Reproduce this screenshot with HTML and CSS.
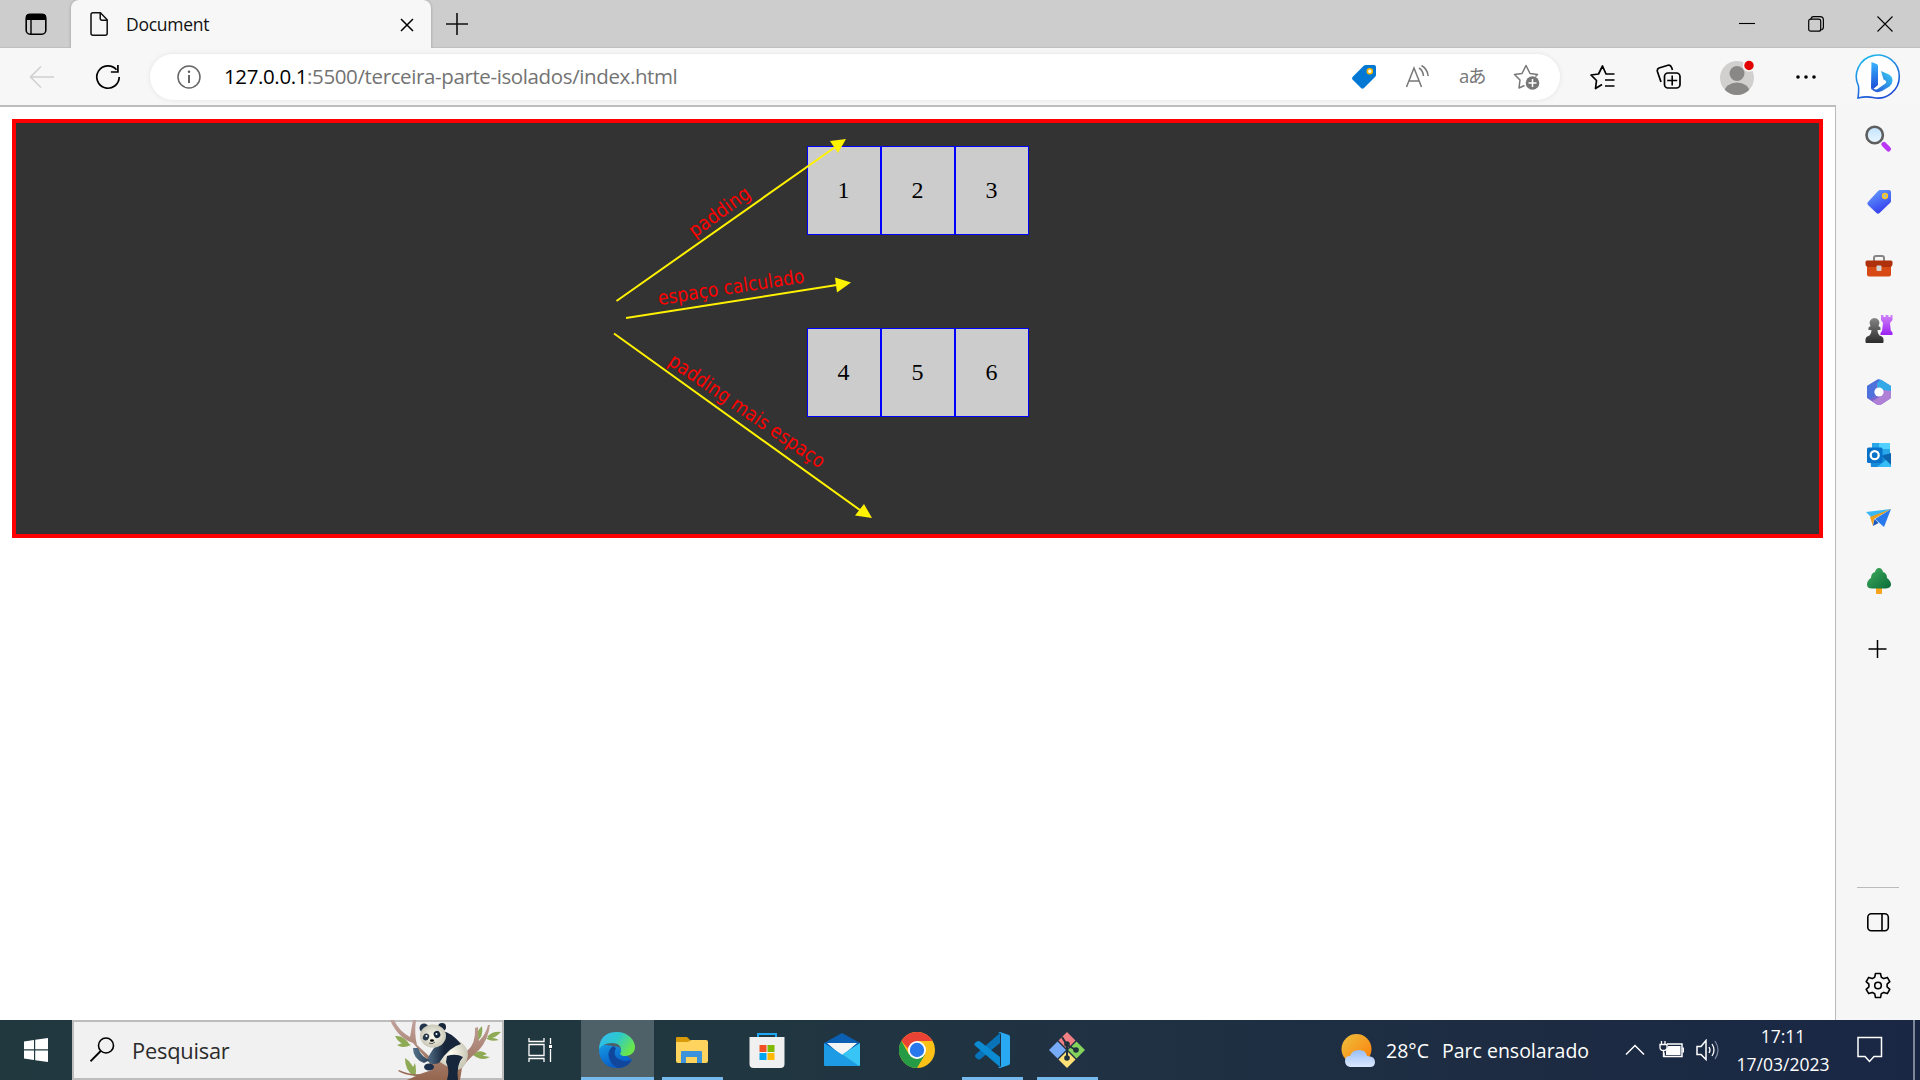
FILE: index.html
```html
<!DOCTYPE html>
<html lang="pt-BR">
<head>
<meta charset="utf-8">
<title>Document</title>
<link rel="stylesheet" href="styles.css">
</head>
<body>
<div class="screen">
  <header class="tabstrip">
    <div class="workspace"><svg width="24" height="24" viewBox="0 0 24 24"><rect x="2.2" y="2.2" width="19.6" height="20" rx="4" fill="none" stroke="#000" stroke-width="1.6"/><path d="M2 8V5q0-3 3-3h14q3 0 3 3v3z"/><path d="M7 8v14" stroke="#000" stroke-width="1.4"/></svg></div>
    <div class="tab">
      <svg width="20" height="26" viewBox="0 0 20 26"><path d="M4 1.8h7.4l6.8 7v13.4q0 2-2 2H4q-2 0-2-2V3.8q0-2 2-2zM11.2 2v5.2q0 2 2 2h5" fill="none" stroke="#111" stroke-width="1.5"/></svg>
      <span class="tab-title">Document</span>
      <svg class="tab-close" width="14" height="14" viewBox="0 0 14 14"><path d="M1 1l12 12M13 1L1 13" stroke="#000" stroke-width="1.5"/></svg>
    </div>
    <svg class="newtab" width="22" height="22" viewBox="0 0 22 22"><path d="M11 0v22M0 11h22" stroke="#111" stroke-width="1.6"/></svg>
    <div class="winbtns">
      <svg width="16" height="16" viewBox="0 0 16 16"><path d="M0 7.500h16" stroke="#000" stroke-width="1.1"/></svg>
      <svg width="16" height="16" viewBox="0 0 16 16"><path d="M3 3.5V2.7Q3.5.7 5.5.7H12Q15.4.7 15.4 4v7q0 2.4-2.2 2.8" fill="none" stroke="#000" stroke-width="1.2"/><rect x=".7" y="3.2" width="12" height="12" rx="2" fill="none" stroke="#000" stroke-width="1.2"/></svg>
      <svg width="16" height="16" viewBox="0 0 16 16"><path d="M.5.5l15 15M15.500.5l-15 15" stroke="#000" stroke-width="1.1"/></svg>
    </div>
  </header>

  <div class="toolbar">
    <svg class="back" width="26" height="24" viewBox="0 0 26 24"><path d="M12 1.500L1.500 12 12 22.500M1.500 12H25" fill="none" stroke="#d0d0d0" stroke-width="1.6"/></svg>
    <svg class="reload" width="26" height="26" viewBox="0 0 26 26"><path d="M24.200 13A11.200 11.200 0 1 1 21.500 5.700M22.900 1v7h-7" fill="none" stroke="#000" stroke-width="1.7"/></svg>
    <div class="omnibox">
      <svg width="24" height="24" viewBox="0 0 24 24"><circle cx="12" cy="12" r="11" fill="none" stroke="#666" stroke-width="1.5"/><path d="M12 10v8" stroke="#555" stroke-width="1.8"/><circle cx="12" cy="6.800" r="1.200" fill="#555"/></svg>
      <span class="url"><b>127.0.0.1</b>:5500/terceira-parte-isolados/index.html</span>
      <div class="omni-actions">
        <svg width="26" height="26" viewBox="0 0 26 26"><path d="M15 1h8q2 0 2 2v8q0 1-1 2L13 24q-1.500 1.500-3 0L1.500 15.500q-1-1.200 0-2.500L12.500 2q1-1 2.500-1z" fill="#0078d4"/><circle cx="18.800" cy="7.200" r="2.500" fill="#fff" stroke="#f5b800" stroke-width="1.600"/></svg>
        <svg width="26" height="26" viewBox="0 0 26 26"><path d="M1.500 23L9 4l7.500 19M4 17h10M14 4q4 2.500 4.500 8M16.500 1.500q6 3.500 6.700 10.500" fill="none" stroke="#777" stroke-width="1.500"/></svg>
        <span class="lang">aあ</span>
        <svg width="28" height="28" viewBox="0 0 28 28"><path d="M11.500 22.500L6 25l1-8-5.500-5.500 7.500-1L13 2.500l4 8 7.500 1-2 2" fill="none" stroke="#777" stroke-width="1.500" stroke-linejoin="round"/><circle cx="19.500" cy="20" r="6.800" fill="#767676"/><path d="M19.500 16v8M15.500 20h8" stroke="#fff" stroke-width="1.500"/></svg>
      </div>
    </div>
    <div class="tools">
      <svg width="26" height="26" viewBox="0 0 26 26"><path d="M12 20.500L5.500 24.500l1-8L1 11l7.500-1L12.500 2l3.500 8h8.500M15 16h9.500M15 22h9.500" fill="none" stroke="#000" stroke-width="1.700" stroke-linejoin="round"/></svg>
      <svg width="26" height="26" viewBox="0 0 26 26"><path d="M5 18L1.400 7.500Q.800 5 3 4L12 1.200q2.500-.7 3.500 2L16.500 6" fill="none" stroke="#000" stroke-width="1.700"/><rect x="8.500" y="9" width="15.500" height="15" rx="3.500" fill="none" stroke="#000" stroke-width="1.700"/><path d="M16.200 11.500v10M11.200 16.500h10" stroke="#000" stroke-width="1.600"/></svg>
      <svg width="38" height="38" viewBox="0 0 38 38"><defs><clipPath id="av"><circle cx="18" cy="20" r="17"/></clipPath></defs><circle cx="18" cy="20" r="17" fill="#d2d0ce"/><g clip-path="url(#av)"><circle cx="18" cy="15.500" r="7.500" fill="#8a8886"/><ellipse cx="18" cy="34" rx="12.500" ry="9.500" fill="#8a8886"/></g><circle cx="30" cy="7.500" r="6.200" fill="#f7f7f7"/><circle cx="30" cy="7.500" r="4.700" fill="#e30000"/></svg>
      <svg width="22" height="6" viewBox="0 0 22 6"><circle cx="3" cy="3" r="1.800"/><circle cx="11" cy="3" r="1.800"/><circle cx="19" cy="3" r="1.800"/></svg>
      <svg class="bing" width="50" height="50" viewBox="0 0 50 50"><defs><linearGradient id="b1" x1="0" y1="0" x2=".5" y2="1"><stop offset="0" stop-color="#20c5f0"/><stop offset="1" stop-color="#204fd8"/></linearGradient><linearGradient id="b2" x1="0" y1="0" x2="0" y2="1"><stop offset="0" stop-color="#39b4ff"/><stop offset="1" stop-color="#1947d4"/></linearGradient><linearGradient id="b3" x1="0" y1="1" x2="1" y2="0"><stop offset="0" stop-color="#2452d5"/><stop offset="1" stop-color="#38cef5"/></linearGradient></defs><path d="M4 46q1-7 .5-12A21.500 21.500 0 1 1 19 45.500Q12 44 4 46z" fill="#fff" stroke="url(#b1)" stroke-width="1.600"/><path d="M17.500 10l5 2q1.500.7 1.500 2v19l-6 5q-1-1-1-3z" fill="url(#b2)"/><path d="M27 19l8 3.500q3.500 2 3.500 6 0 3-3 6L28 39q-5 2.500-9-.500-1.500-2-1-4 2 4.500 5.500 2.500l8-5.500q2-2-1-3.500l-1-.600z" fill="url(#b3)"/></svg>
    </div>
  </div>

  <div class="middle">
    <main class="page">
      <section class="container">
        <div class="row"><div class="item">1</div><div class="item">2</div><div class="item">3</div></div>
        <div class="row"><div class="item">4</div><div class="item">5</div><div class="item">6</div></div>
        <svg class="notes" width="300" height="411" viewBox="600 123 300 411">
          <g stroke="#fff200" stroke-width="2"><path d="M616.500 301L836 146.500M626 318L840 284.500M614 333.500L862 511.500"/></g>
          <g fill="#fff200"><path d="M846 139l-16 2 8 12zM851 282.500l-16-5 2 15zM872 518l-8-14-9 11.500z"/></g>
          <g class="labels">
            <text transform="translate(694.500 238) rotate(-36)" textLength="71" lengthAdjust="spacingAndGlyphs">padding</text>
            <text transform="translate(659 305) rotate(-8.800)" textLength="148" lengthAdjust="spacingAndGlyphs">espaço calculado</text>
            <text transform="translate(667 364) rotate(34.500)" textLength="185" lengthAdjust="spacingAndGlyphs">padding mais espaço</text>
          </g>
        </svg>
      </section>
    </main>

    <aside class="sidebar">
      <nav class="apps">
        <svg viewBox="0 0 28 28"><defs><linearGradient id="lens" x2="0" y2="1"><stop stop-color="#c3e4ff"/><stop offset="1" stop-color="#e9f6ff"/></linearGradient></defs><path d="M17 18l7.500 7" stroke="#777" stroke-width="3"/><path d="M19 19.500l4.500 4.500" stroke="#b937f5" stroke-width="5" stroke-linecap="round"/><circle cx="9.700" cy="10" r="8.200" fill="url(#lens)" stroke="#5e5e5e" stroke-width="2.600"/></svg>
        <svg viewBox="0 0 28 28"><defs><linearGradient id="tg" x2=".5" y2="1"><stop stop-color="#67a6ff"/><stop offset="1" stop-color="#353fee"/></linearGradient></defs><path d="M14.500 2H24q2 0 2 2v9q0 1-1 2L14.500 25q-1.500 1.500-3 0L3 17q-1.500-1.500 0-3L13 3z" fill="url(#tg)"/><circle cx="20" cy="8" r="2.300" fill="#9bd" stroke="#ffc71c" stroke-width="1.700"/></svg>
        <svg viewBox="0 0 28 28"><path d="M9 9V6q0-2 2-2h6q2 0 2 2v3" fill="none" stroke="#858585" stroke-width="2"/><rect x="2" y="12" width="24" height="12.500" rx="2" fill="#d74a16"/><path d="M2 8.500h24q1.500 0 1.500 1.500v2q0 3-3.500 3H4q-3.500 0-3.500-3v-2Q.500 8.500 2 8.500z" fill="#ae300c"/><rect x="11.500" y="13.500" width="5" height="5.500" rx="1" fill="#d4d4d4"/></svg>
        <svg viewBox="0 0 28 28"><defs><linearGradient id="rk" x2="0" y2="1"><stop stop-color="#cf83f8"/><stop offset="1" stop-color="#9c20f3"/></linearGradient><linearGradient id="pw" x2="0" y2="1"><stop stop-color="#858585"/><stop offset="1" stop-color="#2b2b2b"/></linearGradient></defs><path d="M16 0h2.500v2h2V0h3v2h2V0H27.500v5L25 8l.8 7.500 1.700 2V20H15.500v-2l1.500-2 1-8-2-3z" fill="url(#rk)"/><path d="M9.500 3a5 5 0 0 1 4 8l2 1.500v2.500h-3q0 3.500 2 5.500 4 1 4 4V27q0 1-1 1h-16q-1 0-1-1v-2.500q0-3 4-4 2-2 2-5.500h-3v-2.500l2-1.500a5 5 0 0 1 4-8z" fill="url(#pw)"/></svg>
        <svg viewBox="0 0 28 28"><path d="M11 2.500Q14 .5 17 2.500L26 8v12L17 26q-3 2-6 0L2 20V8z" fill="#7568d0"/><path d="M12 1.800q3-1 5 .5L26 8v9l-8.500-4L12 9z" fill="#35a8e8"/><path d="M26 13v7l-9 6q-3 2-6 0l-4-2.800 11-6.200V12z" fill="#b07fd6"/><path d="M2 8l9-5.500Q13 1 15 2l-4 4.500V17l-6 4-3-1.500z" fill="#4d72dc"/><circle cx="14" cy="14" r="4.600" fill="#fff"/></svg>
        <svg viewBox="0 0 28 28"><path d="M7 2h18v13H7z" fill="#28a8ea"/><path d="M14 2h11v6H14z" fill="#50d0ff"/><path d="M5 14l21-1v13H6z" fill="#168bd8"/><path d="M12 26l14-11v11z" fill="#35bdf5"/><path d="M17 15l9-3v12z" fill="#0a65ae"/><rect x="2" y="6.500" width="15.500" height="15.500" rx="1.500" fill="#0871c8"/><circle cx="9.700" cy="14.200" r="4" fill="none" stroke="#fff" stroke-width="2.300"/></svg>
        <svg viewBox="0 0 28 28"><path d="M1 7l25-3L8 14z" fill="#39b8f5"/><path d="M26 4L10 14l9 8z" fill="#2879ed"/><path d="M5 12L26 4 9 14l-1 7z" fill="#f0a018"/><path d="M8 21l1.500-7 4 4z" fill="#1756bd"/></svg>
        <svg viewBox="0 0 28 28"><defs><linearGradient id="tr" x2="1" y2="1"><stop stop-color="#42ae60"/><stop offset="1" stop-color="#086b37"/></linearGradient></defs><path d="M11 19h6v6q0 1-1 1h-4q-1 0-1-1z" fill="#f4a31b"/><path d="M14 0q3 0 4 4 4 1 4 6 4 3 4 6.500t-5 4H7q-5 0-5-4T6 10q0-5 4-6 1-4 4-4z" fill="url(#tr)"/></svg>
        <svg class="add" viewBox="0 0 28 28"><path d="M12.500 5v18M3.500 14h18" stroke="#000" stroke-width="1.500"/></svg>
      </nav>
      <div class="side-foot">
        <hr>
        <svg width="26" height="26" viewBox="0 0 26 26"><rect x="2.800" y="4.800" width="20.500" height="17" rx="3.500" fill="none" stroke="#000" stroke-width="1.600"/><path d="M17 5v17" stroke="#000" stroke-width="1.600"/></svg>
        <svg width="28" height="28" viewBox="0 0 28 28"><path d="M11.500 2.500h5l.8 3.700 2.500 1.400 3.500-1.200 2.500 4.300-2.700 2.500v2.600l2.700 2.500-2.500 4.300-3.500-1.200-2.500 1.400-.8 3.700h-5l-.8-3.700-2.500-1.400-3.500 1.200-2.500-4.300 2.700-2.500v-2.600l-2.700-2.500 2.500-4.300 3.500 1.200 2.500-1.400z" fill="none" stroke="#000" stroke-width="1.600" stroke-linejoin="round"/><circle cx="14" cy="14.500" r="3.300" fill="none" stroke="#000" stroke-width="1.600"/></svg>
      </div>
    </aside>
  </div>

  <footer class="taskbar">
    <div class="start"><svg width="24" height="24" viewBox="0 0 24 24" fill="#fff"><path d="M0 3.500L10 2v9.300H0zM11.200 1.800L24 0v11.300H11.200zM0 12.500h10V22L0 20.500zM11.200 12.500H24V24l-12.800-1.800z"/></svg></div>
    <div class="search">
      <svg width="26" height="26" viewBox="0 0 26 26"><circle cx="16" cy="8.500" r="7.500" fill="none" stroke="#000" stroke-width="1.600"/><path d="M10.700 14L.5 24.300" stroke="#000" stroke-width="1.800"/></svg>
      <span>Pesquisar</span>
      <svg class="panda" width="112" height="60" viewBox="0 0 112 60">
        <defs><linearGradient id="bark" x2="0" y2="1"><stop stop-color="#c0a29b"/><stop offset="1" stop-color="#95664e"/></linearGradient><radialGradient id="fur"><stop stop-color="#fffdf0"/><stop offset="1" stop-color="#c9c8b8"/></radialGradient><linearGradient id="dark" x2="1"><stop stop-color="#54718a"/><stop offset=".5" stop-color="#17263b"/></linearGradient></defs>
        <g fill="#8faa55"><path d="M5 16q9-1 15 9Q9 25 5 16zM7 25q9-4 14 0-8 4-14 0zM15 38q10 6 9 18Q15 51 15 38zM25 43q2 9 0 14-5-6 0-14zM92 6q2 11-6 16-1-10 6-16zM111 12q-9 9-14 5 5-6 14-5zM109 20q-9 2-13-2 8-1 13 2zM82 35q8-7 15-1-8 4-15 1zM83 35q9 0 17 2-8 5-17-2z"/></g>
        <path d="M0 0h4q5 11 16 17L23 0h3q-2 14 1 25l12 11q10 8 24 7l14-12Q86 24 85 8l3-1q0 11 1 14 7-7 9-16h2q-2 15-11 25Q76 41 72 48l-2 12H17l9-4Q14 55 8 51l1-1q10 5 21 4l12-4-3-8L23 23Q8 18 0 0z" fill="url(#bark)"/>
        <path d="M49 23q8-11 18-3 14 7 10 20-3 11-14 10L45 39z" fill="url(#fur)"/>
        <path d="M52 11q9 1 19 13-12 3-22 19-8 3-12-3 5-12 16-21z" fill="url(#dark)"/>
        <path d="M23 28q0 11 11 15l6-3q-8-2-12-12zM57 36q9-3 16 1-7 7-5 23H57q3-10-1-18z" fill="url(#dark)"/><ellipse cx="39" cy="47" rx="5" ry="3.500" fill="#1c304b"/>
        <circle cx="34" cy="8" r="4.500" fill="#22354c"/><circle cx="52" cy="7" r="4" fill="#17263b"/><ellipse cx="43" cy="16" rx="13" ry="11.500" fill="url(#fur)"/><ellipse cx="36" cy="17" rx="3" ry="3.600" fill="#26374b" transform="rotate(25 36 17)"/><ellipse cx="47" cy="14.500" rx="3.300" ry="3.600" fill="#17263b" transform="rotate(-25 47 14.500)"/><circle cx="36.500" cy="16" r="1" fill="#fff"/><circle cx="46.500" cy="14" r="1" fill="#fff"/><ellipse cx="42" cy="20.500" rx="2" ry="1.300"/><path d="M39 23q3 2 6-1" fill="none" stroke="#444" stroke-width=".8"/>
      </svg>
    </div>
    <div class="task"><svg width="24" height="24" viewBox="0 0 24 24"><path d="M1 0v3.500h15V0M1 6.500h15v11H1zM1 24v-3.500h15V24M22.500 0v6M22.500 11v13" fill="none" stroke="#fff" stroke-width="1.300"/><path d="M21 7h3v3h-3z" fill="#fff"/></svg></div>
    <div class="task edge open"><svg width="36" height="36" viewBox="0 0 36 36"><defs><linearGradient id="e1" x2="1" y2=".5"><stop stop-color="#36baf5"/><stop offset=".5" stop-color="#2cc7cf"/><stop offset="1" stop-color="#69e64c"/></linearGradient><linearGradient id="e2" x2=".5" y2="1"><stop stop-color="#179ce5"/><stop offset="1" stop-color="#0759c4"/></linearGradient></defs><path d="M1 12Q-1 18 1 24q4 12 17 12 10 0 15-8l-6-5-7-8z" fill="url(#e2)"/><path d="M0 17Q1 0 18 0c11 0 18 8 18 15 0 6-5 9-10 9-4 0-6-2-4-4 1-6-3-9-9-9Q4 11 0 17z" fill="url(#e1)"/><path d="M14 14q-6 5-4 12t9 10q9 0 14-8-9 3-15-2-4-4-1-10z" fill="#10479c"/></svg></div>
    <div class="task open"><svg width="36" height="36" viewBox="0 0 36 36"><path d="M2 9V6q0-1 1-1h10l3 3v5H2z" fill="#d99a09"/><path d="M2 10h12l3-2h15q2 0 2 2v19q0 2-2 2H4q-2 0-2-2z" fill="#ffd45e"/><path d="M7 31V20q0-1 1-1h19q1 0 1 1v11h-5v-6H12v6z" fill="#3c93dc"/></svg></div>
    <div class="task"><svg width="36" height="36" viewBox="0 0 36 36"><path d="M9 7V2h18v5" fill="none" stroke="#20a9f3" stroke-width="2"/><path d="M.500 5h35v27q0 4-4 4h-27q-4 0-4-4z" fill="#f0f0f0"/><path d="M10.500 13h7v7h-7z" fill="#f25022"/><path d="M18.500 13h7v7h-7z" fill="#7fba00"/><path d="M10.500 21h7v7h-7z" fill="#00a4ef"/><path d="M18.500 21h7v7h-7z" fill="#ffb900"/></svg></div>
    <div class="task"><svg width="36" height="36" viewBox="0 0 36 36"><path d="M0 11L18 1l18 10v10H0z" fill="#0b5fb2"/><path d="M3 11h30L18 24z" fill="#f4f4f4"/><path d="M0 11l36 23H1q-1 0-1-1z" fill="#1e9be5"/><path d="M36 11v22q0 1-1 1L18 22.500z" fill="#38c4f5"/></svg></div>
    <div class="task"><svg width="36" height="36" viewBox="0 0 36 36"><circle cx="18" cy="18" r="18" fill="#fbc116"/><path d="M2.400 9A18 18 0 0 1 33.600 9H18v18z" fill="#ea4335"/><path d="M2.400 9A18 18 0 0 0 18 36l8-13.500H10z" fill="#259b45"/><circle cx="18" cy="18" r="9" fill="#fff"/><circle cx="18" cy="18" r="7.200" fill="#2878ed"/></svg></div>
    <div class="task open"><svg width="36" height="36" viewBox="0 0 36 36"><path d="M26 1L2 22q-2 2 0 4l1.500 1q1 1 3 0L26 11z" fill="#0873b8"/><path d="M26 35L1.500 14q-2-2 0-3.500L3 9.500q1.500-1 3 0L26 25z" fill="#0c8bd2"/><path d="M26 0l9 3q1 1 1 2v26q0 1-1 2l-9 3q-1 .5-2-1 3 1 3-2V3q0-3-3-2 1-1 2-1z" fill="#29a9f2"/></svg></div>
    <div class="task open"><svg width="36" height="36" viewBox="0 0 36 36"><path d="M18 0l8.500 8.500L18 17 9.500 8.500z" fill="#f17e82"/><path d="M8.500 9.500L17 18l-8.500 8.500L0 18z" fill="#78abf7"/><path d="M27.500 9.500L36 18l-8.500 8.500L19 18z" fill="#83d35c"/><path d="M18 19l8.500 8.500L18 36l-8.500-8.500z" fill="#ffe177"/><path d="M13 5l5 8v13M18 13l9 5" fill="none" stroke="#20313e" stroke-width="2"/><circle cx="18" cy="12" r="2.800" fill="#20313e"/><circle cx="27" cy="18" r="2.800" fill="#20313e"/><circle cx="18" cy="26" r="2.800" fill="#20313e"/></svg></div>
    <div class="tray">
      <svg class="weather" width="34" height="36" viewBox="0 0 34 36"><defs><linearGradient id="sun" x2="1" y2="1"><stop stop-color="#ecc13f"/><stop offset="1" stop-color="#ff7c08"/></linearGradient><linearGradient id="cl" x2="0" y2="1"><stop stop-color="#98c0f8"/><stop offset="1" stop-color="#dce8fd"/></linearGradient></defs><circle cx="15.500" cy="17" r="15" fill="url(#sun)"/><path d="M9 35q-5-1-5-6 0-5 5-5 2-6 9-6 7 0 8 6 8 0 8 6 0 5-5 5z" fill="url(#cl)"/></svg>
      <span class="temp">28°C</span><span class="cond">Parc ensolarado</span>
      <svg class="caret" width="20" height="12" viewBox="0 0 20 12"><path d="M1 10.500l9-9 9 9" fill="none" stroke="#fff" stroke-width="1.500"/></svg>
      <svg class="battery" width="26" height="18" viewBox="0 0 26 18"><path d="M8 3h15v12.500H5v-4" fill="none" stroke="#fff" stroke-width="1.500"/><path d="M9 5h12.500v9H7v-4zM23.500 6.500H25v5h-1.500z" fill="#fff"/><path d="M2.500-.5v4M6-.5v4M1 3.500h7v3q0 3-3.500 3T1 6.500zM4.500 10v6" stroke="#fff" stroke-width="1.300" fill="none"/></svg>
      <svg class="speaker" width="24" height="22" viewBox="0 0 24 22"><path d="M1 7.500h4L10 1.500v19l-5-5H1z" fill="none" stroke="#fff" stroke-width="1.500"/><path d="M13 8q2 3 0 6M16 5q4 6 0 12" fill="none" stroke="#fff" stroke-width="1.300"/><path d="M19 2q6 9 0 18" fill="none" stroke="#78849a" stroke-width="1.300"/></svg>
      <div class="clock"><span class="time">17:11</span><span class="date">17/03/2023</span></div>
      <svg class="notif" width="26" height="28" viewBox="0 0 26 28"><path d="M1 1.500h23.500v19H17l-4.500 5L8 20.500H1z" fill="none" stroke="#fff" stroke-width="1.500"/></svg>
    </div>
    <div class="desktop"></div>
  </footer>
</div>
</body>
</html>
```
FILE: styles.css
```css
* { box-sizing: border-box; }
body { margin: 0; font-family: "Open Sans", "Noto Sans", "Noto Sans CJK JP", sans-serif; }
svg { display: block; flex: none; }
span { white-space: nowrap; }
.screen { width: 1920px; height: 1080px; overflow: hidden; display: flex; flex-direction: column; background: #fff; }

.tabstrip { height: 48px; flex: none; background: #cdcdcd; display: flex; align-items: center; box-shadow: inset 0 -1px 0 #bfbfbf; }
.workspace { width: 71px; padding-left: 24px; }
.tab { width: 360px; height: 48px; background: #f7f7f7; border-radius: 8px 8px 0 0; display: flex; align-items: center; padding: 0 17px 0 18px; box-shadow: 0 0 3px #999; clip-path: inset(0 -3px 0 -3px); }
.tab-title { margin-left: 17px; padding-bottom: 1px; font-size: 17.5px; letter-spacing: -0.25px; color: #111; }
.tab-close { margin-left: auto; margin-top: 2px; }
.newtab { margin-left: 15px; }
.winbtns { margin-left: auto; display: flex; gap: 53px; padding-right: 27px; }

.toolbar { height: 57px; flex: none; background: #f7f7f7; display: flex; align-items: center; padding-left: 29px; }
.reload { margin-left: 40px; }
.omnibox { width: 1410px; height: 46px; margin-left: 29px; border-radius: 23px; background: #fff; box-shadow: 0 0 5px #e3e3e3; display: flex; align-items: center; padding-left: 27px; padding-right: 19px; }
.url { margin-left: 23px; padding-bottom: 1px; font-size: 20.5px; color: #737373; letter-spacing: -0.38px; }
.url b { font-weight: 400; color: #000; }
.omni-actions { margin-left: auto; display: flex; align-items: center; gap: 28px; }
.lang { width: 26px; font-size: 18.5px; line-height: 24px; padding-bottom: 2px; color: #777; letter-spacing: -1.2px; }
.tools { display: flex; align-items: center; flex: 1; padding-left: 30px; }
.tools svg:nth-child(2) { margin-left: 40px; }
.tools svg:nth-child(3) { margin-left: 37px; }
.tools svg:nth-child(4) { margin-left: 38px; }
.tools .bing { margin-left: 37px; }

.middle { height: 915px; flex: none; display: flex; }
.page { width: 1835px; border-top: 2px solid #bdbdbd; padding: 12px; }
.container { position: relative; width: 1811px; height: 419px; border: 4px solid #f00; background: #333; padding-top: 23px; display: flex; flex-direction: column; align-items: center; gap: 93px; }
.row { display: flex; height: 89px; padding-left: 1px; }
.item { width: 74px; border: 1px solid #00f; background: #ccc; font: 24px "Liberation Serif", serif; display: flex; align-items: center; justify-content: center; padding-right: 1px; }
.notes { position: absolute; left: 584px; top: 0; }
.labels { fill: #f00; font: 19.5px "DejaVu Sans", sans-serif; }

.sidebar { width: 85px; border-left: 1px solid #bbb; background: #f6f6f6; display: flex; flex-direction: column; justify-content: space-between; }
.apps { display: flex; flex-direction: column; gap: 35.3px; padding: 20px 0 0 29px; }
.apps svg { width: 28px; height: 28px; }
.apps .add { margin-top: 4px; }
.side-foot { display: flex; flex-direction: column; align-items: center; padding-bottom: 21px; }
.side-foot hr { width: 42px; margin: 0; border: 0; border-top: 1px solid #bbb; }
.side-foot svg { margin-top: 21px; }
.side-foot svg:last-child { margin-top: 36px; }

.taskbar { height: 60px; flex: none; display: flex; background: linear-gradient(90deg, #21383f 0, #203640 40%, #203143 58%, #1d2c42 78%, #192745 100%); color: #fff; }
.start { width: 72px; display: flex; align-items: center; justify-content: center; }
.search { width: 432px; border: 2px solid #bdbdbd; background: #f1f1f1; display: flex; align-items: center; padding-left: 16px; }
.search span { margin-left: 16px; padding-top: 1px; font-size: 21.8px; letter-spacing: -0.2px; color: #2b2b2b; }
.panda { margin: -2px 0 -2px auto; }
.task { width: 75px; display: flex; align-items: center; justify-content: center; padding-right: 2px; }
.search + .task { width: 72px; margin-right: 5px; padding-right: 0; }
.open { background: linear-gradient(#76b9ed, #76b9ed) 50% 100% / 61px 3px no-repeat; }
.edge { width: 73px; margin-right: 1px; background-color: #4e6068; background-size: 100% 3px; }
.tray { margin-left: auto; display: flex; align-items: center; }
.temp { margin-left: 11px; width: 56px; font-size: 19.5px; }
.cond { width: 148px; font-size: 19.5px; }
.caret { margin-left: 35px; }
.battery { margin-left: 14px; }
.speaker { margin-left: 11px; }
.clock { width: 96px; margin-left: 15px; display: flex; flex-direction: column; align-items: center; font-size: 17.5px; line-height: 28px; }
.notif { margin-left: 26px; }
.desktop { width: 7px; margin-left: 30px; border-left: 2px solid #7c8798; }
```
